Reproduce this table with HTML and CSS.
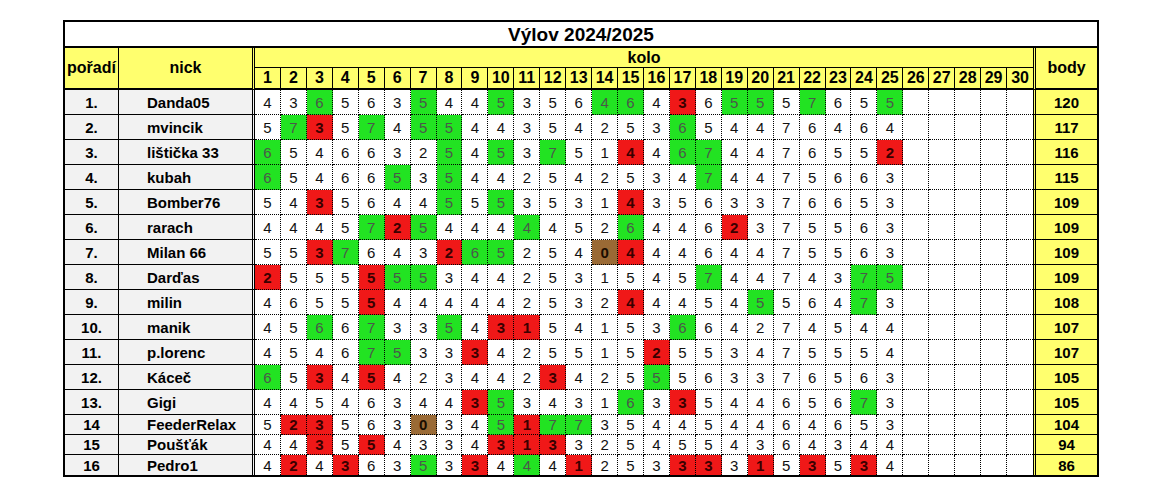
FILE: index.html
```html
<!DOCTYPE html>
<html lang="cs">
<head>
<meta charset="utf-8">
<title>Výlov 2024/2025</title>
<link rel="stylesheet" href="styles.css">
</head>
<body>
<div class="sheet">
  <div class="title">Výlov 2024/2025</div>
  <div class="h hr">pořadí</div>
  <div class="h hn">nick</div>
  <div class="h hk">kolo</div>
  <div class="h hb">body</div>
  <div class="nums">
    <div class="n">1</div><div class="n">2</div><div class="n">3</div><div class="n">4</div><div class="n">5</div><div class="n">6</div><div class="n">7</div><div class="n">8</div><div class="n">9</div><div class="n">10</div><div class="n">11</div><div class="n">12</div><div class="n">13</div><div class="n">14</div><div class="n">15</div><div class="n">16</div><div class="n">17</div><div class="n">18</div><div class="n">19</div><div class="n">20</div><div class="n">21</div><div class="n">22</div><div class="n">23</div><div class="n">24</div><div class="n">25</div><div class="n">26</div><div class="n">27</div><div class="n">28</div><div class="n">29</div><div class="n">30</div>
  </div>

  <div class="row"><div class="r">1.</div><div class="nm">Danda05</div><div class="s">4</div><div class="s">3</div><div class="s g">6</div><div class="s">5</div><div class="s">6</div><div class="s">3</div><div class="s g">5</div><div class="s">4</div><div class="s">4</div><div class="s g">5</div><div class="s">3</div><div class="s">5</div><div class="s">6</div><div class="s g">4</div><div class="s g">6</div><div class="s">4</div><div class="s x">3</div><div class="s">6</div><div class="s g">5</div><div class="s g">5</div><div class="s">5</div><div class="s g">7</div><div class="s">6</div><div class="s">5</div><div class="s g">5</div><div class="s"></div><div class="s"></div><div class="s"></div><div class="s"></div><div class="s"></div><div class="bd">120</div></div>

  <div class="row"><div class="r">2.</div><div class="nm">mvincik</div><div class="s">5</div><div class="s g">7</div><div class="s x">3</div><div class="s">5</div><div class="s g">7</div><div class="s">4</div><div class="s g">5</div><div class="s g">5</div><div class="s">4</div><div class="s">4</div><div class="s">3</div><div class="s">5</div><div class="s">4</div><div class="s">2</div><div class="s">5</div><div class="s">3</div><div class="s g">6</div><div class="s">5</div><div class="s">4</div><div class="s">4</div><div class="s">7</div><div class="s">6</div><div class="s">4</div><div class="s">6</div><div class="s">4</div><div class="s"></div><div class="s"></div><div class="s"></div><div class="s"></div><div class="s"></div><div class="bd">117</div></div>

  <div class="row"><div class="r">3.</div><div class="nm">lištička 33</div><div class="s g">6</div><div class="s">5</div><div class="s">4</div><div class="s">6</div><div class="s">6</div><div class="s">3</div><div class="s">2</div><div class="s g">5</div><div class="s">4</div><div class="s g">5</div><div class="s">3</div><div class="s g">7</div><div class="s">5</div><div class="s">1</div><div class="s x">4</div><div class="s">4</div><div class="s g">6</div><div class="s g">7</div><div class="s">4</div><div class="s">4</div><div class="s">7</div><div class="s">6</div><div class="s">5</div><div class="s">5</div><div class="s x">2</div><div class="s"></div><div class="s"></div><div class="s"></div><div class="s"></div><div class="s"></div><div class="bd">116</div></div>

  <div class="row"><div class="r">4.</div><div class="nm">kubah</div><div class="s g">6</div><div class="s">5</div><div class="s">4</div><div class="s">6</div><div class="s">6</div><div class="s g">5</div><div class="s">3</div><div class="s g">5</div><div class="s">4</div><div class="s">4</div><div class="s">2</div><div class="s">5</div><div class="s">4</div><div class="s">2</div><div class="s">5</div><div class="s">3</div><div class="s">4</div><div class="s g">7</div><div class="s">4</div><div class="s">4</div><div class="s">7</div><div class="s">5</div><div class="s">6</div><div class="s">6</div><div class="s">3</div><div class="s"></div><div class="s"></div><div class="s"></div><div class="s"></div><div class="s"></div><div class="bd">115</div></div>

  <div class="row"><div class="r">5.</div><div class="nm">Bomber76</div><div class="s">5</div><div class="s">4</div><div class="s x">3</div><div class="s">5</div><div class="s">6</div><div class="s">4</div><div class="s">4</div><div class="s g">5</div><div class="s">5</div><div class="s g">5</div><div class="s">3</div><div class="s">5</div><div class="s">3</div><div class="s">1</div><div class="s x">4</div><div class="s">3</div><div class="s">5</div><div class="s">6</div><div class="s">3</div><div class="s">3</div><div class="s">7</div><div class="s">6</div><div class="s">6</div><div class="s">5</div><div class="s">3</div><div class="s"></div><div class="s"></div><div class="s"></div><div class="s"></div><div class="s"></div><div class="bd">109</div></div>

  <div class="row"><div class="r">6.</div><div class="nm">rarach</div><div class="s">4</div><div class="s">4</div><div class="s">4</div><div class="s">5</div><div class="s g">7</div><div class="s x">2</div><div class="s g">5</div><div class="s">4</div><div class="s">4</div><div class="s">4</div><div class="s g">4</div><div class="s">4</div><div class="s">5</div><div class="s">2</div><div class="s g">6</div><div class="s">4</div><div class="s">4</div><div class="s">6</div><div class="s x">2</div><div class="s">3</div><div class="s">7</div><div class="s">5</div><div class="s">5</div><div class="s">6</div><div class="s">3</div><div class="s"></div><div class="s"></div><div class="s"></div><div class="s"></div><div class="s"></div><div class="bd">109</div></div>

  <div class="row"><div class="r">7.</div><div class="nm">Milan 66</div><div class="s">5</div><div class="s">5</div><div class="s x">3</div><div class="s g">7</div><div class="s">6</div><div class="s">4</div><div class="s">3</div><div class="s x">2</div><div class="s g">6</div><div class="s g">5</div><div class="s">2</div><div class="s">5</div><div class="s">4</div><div class="s b">0</div><div class="s x">4</div><div class="s">4</div><div class="s">4</div><div class="s">6</div><div class="s">4</div><div class="s">4</div><div class="s">7</div><div class="s">5</div><div class="s">5</div><div class="s">6</div><div class="s">3</div><div class="s"></div><div class="s"></div><div class="s"></div><div class="s"></div><div class="s"></div><div class="bd">109</div></div>

  <div class="row"><div class="r">8.</div><div class="nm">Darďas</div><div class="s x">2</div><div class="s">5</div><div class="s">5</div><div class="s">5</div><div class="s x">5</div><div class="s g">5</div><div class="s g">5</div><div class="s">3</div><div class="s">4</div><div class="s">4</div><div class="s">2</div><div class="s">5</div><div class="s">3</div><div class="s">1</div><div class="s">5</div><div class="s">4</div><div class="s">5</div><div class="s g">7</div><div class="s">4</div><div class="s">4</div><div class="s">7</div><div class="s">4</div><div class="s">3</div><div class="s g">7</div><div class="s g">5</div><div class="s"></div><div class="s"></div><div class="s"></div><div class="s"></div><div class="s"></div><div class="bd">109</div></div>

  <div class="row"><div class="r">9.</div><div class="nm">milin</div><div class="s">4</div><div class="s">6</div><div class="s">5</div><div class="s">5</div><div class="s x">5</div><div class="s">4</div><div class="s">4</div><div class="s">4</div><div class="s">4</div><div class="s">4</div><div class="s">2</div><div class="s">5</div><div class="s">3</div><div class="s">2</div><div class="s x">4</div><div class="s">4</div><div class="s">4</div><div class="s">5</div><div class="s">4</div><div class="s g">5</div><div class="s">5</div><div class="s">6</div><div class="s">4</div><div class="s g">7</div><div class="s">3</div><div class="s"></div><div class="s"></div><div class="s"></div><div class="s"></div><div class="s"></div><div class="bd">108</div></div>

  <div class="row"><div class="r">10.</div><div class="nm">manik</div><div class="s">4</div><div class="s">5</div><div class="s g">6</div><div class="s">6</div><div class="s g">7</div><div class="s">3</div><div class="s">3</div><div class="s g">5</div><div class="s">4</div><div class="s x">3</div><div class="s x">1</div><div class="s">5</div><div class="s">4</div><div class="s">1</div><div class="s">5</div><div class="s">3</div><div class="s g">6</div><div class="s">6</div><div class="s">4</div><div class="s">2</div><div class="s">7</div><div class="s">4</div><div class="s">5</div><div class="s">4</div><div class="s">4</div><div class="s"></div><div class="s"></div><div class="s"></div><div class="s"></div><div class="s"></div><div class="bd">107</div></div>

  <div class="row"><div class="r">11.</div><div class="nm">p.lorenc</div><div class="s">4</div><div class="s">5</div><div class="s">4</div><div class="s">6</div><div class="s g">7</div><div class="s g">5</div><div class="s">3</div><div class="s">3</div><div class="s x">3</div><div class="s">4</div><div class="s">2</div><div class="s">5</div><div class="s">5</div><div class="s">1</div><div class="s">5</div><div class="s x">2</div><div class="s">5</div><div class="s">5</div><div class="s">3</div><div class="s">4</div><div class="s">7</div><div class="s">5</div><div class="s">5</div><div class="s">5</div><div class="s">4</div><div class="s"></div><div class="s"></div><div class="s"></div><div class="s"></div><div class="s"></div><div class="bd">107</div></div>

  <div class="row"><div class="r">12.</div><div class="nm">Káceč</div><div class="s g">6</div><div class="s">5</div><div class="s x">3</div><div class="s">4</div><div class="s x">5</div><div class="s">4</div><div class="s">2</div><div class="s">3</div><div class="s">4</div><div class="s">4</div><div class="s">2</div><div class="s x">3</div><div class="s">4</div><div class="s">2</div><div class="s">5</div><div class="s g">5</div><div class="s">5</div><div class="s">6</div><div class="s">3</div><div class="s">3</div><div class="s">7</div><div class="s">6</div><div class="s">5</div><div class="s">6</div><div class="s">3</div><div class="s"></div><div class="s"></div><div class="s"></div><div class="s"></div><div class="s"></div><div class="bd">105</div></div>

  <div class="row"><div class="r">13.</div><div class="nm">Gigi</div><div class="s">4</div><div class="s">4</div><div class="s">5</div><div class="s">4</div><div class="s">6</div><div class="s">3</div><div class="s">4</div><div class="s">4</div><div class="s x">3</div><div class="s g">5</div><div class="s">3</div><div class="s">4</div><div class="s">3</div><div class="s">1</div><div class="s g">6</div><div class="s">3</div><div class="s x">3</div><div class="s">5</div><div class="s">4</div><div class="s">4</div><div class="s">6</div><div class="s">5</div><div class="s">6</div><div class="s g">7</div><div class="s">3</div><div class="s"></div><div class="s"></div><div class="s"></div><div class="s"></div><div class="s"></div><div class="bd">105</div></div>

  <div class="row"><div class="r">14</div><div class="nm">FeederRelax</div><div class="s">5</div><div class="s x">2</div><div class="s x">3</div><div class="s">5</div><div class="s">6</div><div class="s">3</div><div class="s b">0</div><div class="s">3</div><div class="s">4</div><div class="s g">5</div><div class="s x">1</div><div class="s g">7</div><div class="s g">7</div><div class="s">3</div><div class="s">5</div><div class="s">4</div><div class="s">4</div><div class="s">5</div><div class="s">4</div><div class="s">4</div><div class="s">6</div><div class="s">4</div><div class="s">6</div><div class="s">5</div><div class="s">3</div><div class="s"></div><div class="s"></div><div class="s"></div><div class="s"></div><div class="s"></div><div class="bd">104</div></div>

  <div class="row"><div class="r">15</div><div class="nm">Poušťák</div><div class="s">4</div><div class="s">4</div><div class="s x">3</div><div class="s">5</div><div class="s x">5</div><div class="s">4</div><div class="s">3</div><div class="s">3</div><div class="s">4</div><div class="s x">3</div><div class="s x">1</div><div class="s x">3</div><div class="s">3</div><div class="s">2</div><div class="s">5</div><div class="s">4</div><div class="s">5</div><div class="s">5</div><div class="s">4</div><div class="s">3</div><div class="s">6</div><div class="s">4</div><div class="s">3</div><div class="s">4</div><div class="s">4</div><div class="s"></div><div class="s"></div><div class="s"></div><div class="s"></div><div class="s"></div><div class="bd">94</div></div>

  <div class="row"><div class="r">16</div><div class="nm">Pedro1</div><div class="s">4</div><div class="s x">2</div><div class="s">4</div><div class="s x">3</div><div class="s">6</div><div class="s">3</div><div class="s g">5</div><div class="s">3</div><div class="s x">3</div><div class="s">4</div><div class="s g">4</div><div class="s">4</div><div class="s x">1</div><div class="s">2</div><div class="s">5</div><div class="s">3</div><div class="s x">3</div><div class="s x">3</div><div class="s">3</div><div class="s x">1</div><div class="s">5</div><div class="s x">3</div><div class="s">5</div><div class="s x">3</div><div class="s">4</div><div class="s"></div><div class="s"></div><div class="s"></div><div class="s"></div><div class="s"></div><div class="bd">86</div></div>
</div>
</body>
</html>
```

FILE: styles.css
```css
* {
  box-sizing: border-box;
}

html,
body {
  margin: 0;
  background: #fff;
}

body {
  font-family: "Liberation Sans", Arial, sans-serif;
  color: #111;
}

.sheet {
  display: grid;
  width: 1036px;
  margin: 20px 0 0 63px;
  border: 2px solid #000;
  grid-template-columns: 54px 136px repeat(30, minmax(0, 1fr)) 64px;
  grid-template-rows: 26px 20px 22px repeat(13, 25px) repeat(3, 20px);
}

.row,
.nums {
  display: contents;
}

.title,
.h,
.n,
.r,
.nm,
.s,
.bd {
  display: flex;
  align-items: center;
  justify-content: center;
  line-height: 1;
  white-space: nowrap;
}

.title {
  grid-column: 1 / -1;
  grid-row: 1;
  border-bottom: 2px solid #000;
  font-weight: bold;
  font-size: 19px;
  color: #000;
}

.h {
  background: #ffff6e;
  font-weight: bold;
  font-size: 16px;
  color: #000;
}

.hr {
  grid-column: 1;
  grid-row: 2 / span 2;
  border-right: 1px solid #000;
  border-bottom: 2px solid #000;
}

.hn {
  grid-column: 2;
  grid-row: 2 / span 2;
  border-right: 3px double #000;
  border-bottom: 2px solid #000;
}

.hk {
  grid-column: 3 / span 30;
  grid-row: 2;
  border-bottom: 1px solid #000;
}

.hb {
  grid-column: 33;
  grid-row: 2 / span 2;
  border-left: 3px double #000;
  border-bottom: 2px solid #000;
}

.n {
  background: #ffff6e;
  font-weight: bold;
  font-size: 16px;
  color: #000;
  border-right: 1px solid #000;
  border-bottom: 2px solid #000;
}

.nums > :last-child {
  border-right: 0;
}

.r {
  background: #f2f2f2;
  font-weight: bold;
  font-size: 15px;
  color: #000;
  border-right: 1px solid #000;
  border-bottom: 1px solid #000;
}

.nm {
  background: #f2f2f2;
  font-weight: bold;
  font-size: 15px;
  color: #000;
  justify-content: flex-start;
  padding-left: 28px;
  border-right: 3px double #000;
  border-bottom: 1px solid #000;
}

.s {
  font-size: 15px;
  border-right: 1px dotted #000;
  border-bottom: 1px dotted #000;
}

.g {
  background: #22e322;
  color: #4a584a;
}

.x {
  background: #f01818;
  color: #3a0000;
  font-weight: bold;
}

.b {
  background: #9a6a35;
  color: #1a0d00;
  font-weight: bold;
}

.bd {
  background: #ffff6e;
  font-weight: bold;
  font-size: 15px;
  color: #000;
  border-left: 3px double #000;
  border-bottom: 1px solid #000;
}

.row > :nth-child(32) {
  border-right: 0;
}

.row:last-child > * {
  border-bottom: 0;
}
```
